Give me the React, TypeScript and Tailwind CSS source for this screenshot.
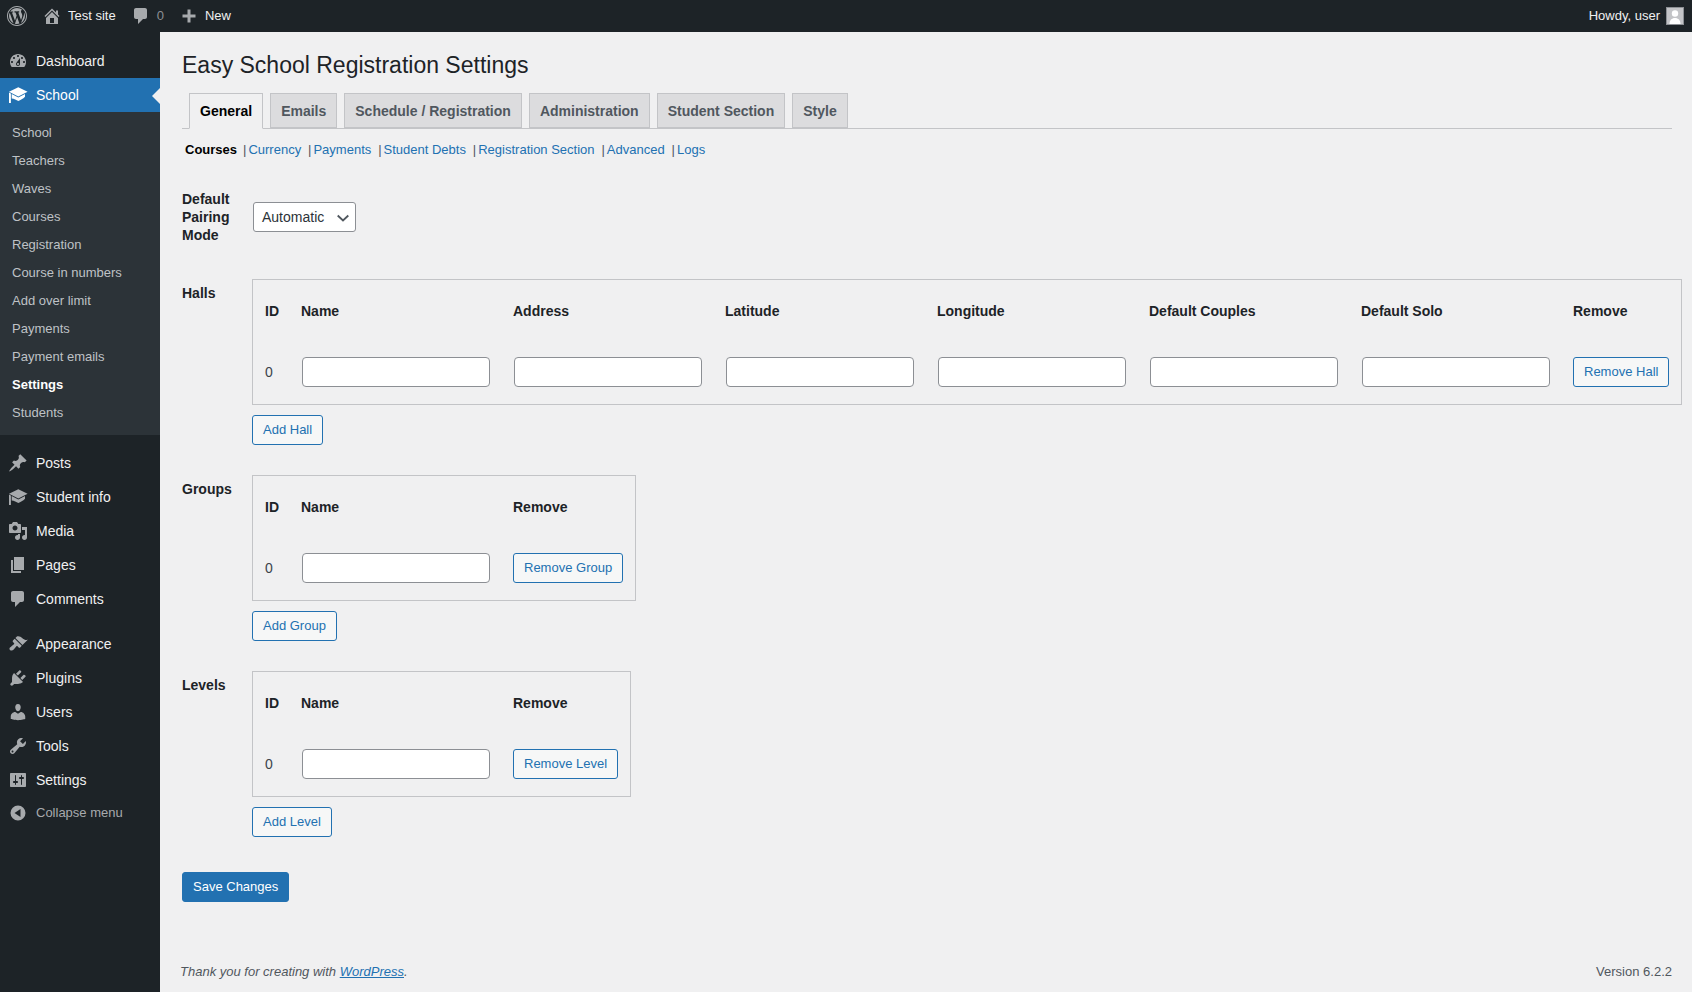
import React from "react";

const paths: Record<string, string> = {
  dashboard:
    "M3.76 16h12.48c1.1-1.37 1.76-3.11 1.76-5 0-4.42-3.58-8-8-8s-8 3.58-8 8c0 1.89.66 3.63 1.76 5zM10 4c.55 0 1 .45 1 1s-.45 1-1 1-1-.45-1-1 .45-1 1-1zM6 6c.55 0 1 .45 1 1s-.45 1-1 1-1-.45-1-1 .45-1 1-1zm8 0c.55 0 1 .45 1 1s-.45 1-1 1-1-.45-1-1 .45-1 1-1zm-5.37 5.55L12 7v6c0 1.1-.9 2-2 2s-2-.9-2-2c0-.57.24-1.08.63-1.45zM4 10c.55 0 1 .45 1 1s-.45 1-1 1-1-.45-1-1 .45-1 1-1zm12 0c.55 0 1 .45 1 1s-.45 1-1 1-1-.45-1-1 .45-1 1-1zm-5 3c0-.55-.45-1-1-1s-1 .45-1 1 .45 1 1 1 1-.45 1-1z",
  learn:
    "M1 6.800 10.300 2.300 19.600 6.800 10.300 11.400ZM1 7.600 2.900 8.500V18H1ZM3.700 8.900 10.300 12.400 17 9V11.800C15 13.800 12.500 15.200 10.300 15.900 8.500 15 6 13.800 3.700 13.500Z",
  post:
    "M10.44 3.02l1.82-1.82 6.36 6.35-1.83 1.82c-1.05-.68-2.48-.57-3.41.36l-.75.75c-.92.93-1.04 2.35-.35 3.41l-1.83 1.82-2.41-2.41-2.8 2.79c-.42.42-3.38 2.71-3.8 2.29s1.86-3.39 2.28-3.81l2.79-2.79L4.1 9.36l1.83-1.82c1.05.69 2.48.57 3.4-.36l.75-.75c.93-.92 1.05-2.35.36-3.41z",
  media:
    "M13 11V4c0-.55-.45-1-1-1h-1.67L9 1H5L3.67 3H2c-.55 0-1 .45-1 1v7c0 .55.45 1 1 1h10c.55 0 1-.45 1-1zM7 4.5c1.38 0 2.5 1.12 2.5 2.5S8.38 9.5 7 9.5 4.5 8.38 4.5 7 5.62 4.5 7 4.5zM14 6h5v10.5c0 1.38-1.12 2.5-2.5 2.5S14 17.88 14 16.5s1.12-2.5 2.5-2.5c.17 0 .34.02.5.05V9h-3V6zm-4 8.05V13h2v3.5c0 1.38-1.12 2.5-2.5 2.5S7 17.88 7 16.5 8.12 14 9.5 14c.17 0 .34.02.5.05z",
  page: "M6 15V2h10v13H6zm-1 1h8v2H3V5h2v11z",
  comments:
    "M5 2h9c1.1 0 2 .9 2 2v7c0 1.1-.9 2-2 2h-2l-5 5v-5H5c-1.1 0-2-.9-2-2V4c0-1.1.9-2 2-2z",
  appearance:
    "M14.48 11.06L7.41 3.99l1.5-1.5c.5-.56 2.3-.47 3.51.32 1.21.8 1.43 1.28 2.91 2.1 1.18.64 2.45 1.26 4.45.85zm-.71.71L6.7 4.7 4.93 6.47c-.39.39-.39 1.02 0 1.41l1.06 1.06c.39.39.39 1.03 0 1.42-.6.6-1.43 1.11-2.21 1.69-.35.26-.7.53-1.01.84C1.43 13.23.99 14.95 2 16c1.05 1.01 2.77.57 3.72-.39.31-.31.58-.66.84-1.01.58-.78 1.09-1.61 1.69-2.21.39-.39 1.03-.39 1.42 0l1.06 1.06c.39.39 1.02.39 1.41 0z",
  plugins:
    "M13.11 4.36L9.87 7.6 8 5.73l3.24-3.24c.35-.34 1.05-.2 1.56.32.52.51.66 1.21.31 1.55zm-8 1.77l.91-1.12 9.01 9.01-1.19.84c-.71.71-2.63 1.16-3.82 1.16H6.14L4.9 17.26c-.59.59-1.54.59-2.12 0-.59-.58-.59-1.53 0-2.12l1.24-1.24v-3.88c0-1.13.4-3.19 1.09-3.89zm7.26 3.97l3.24-3.24c.34-.35 1.04-.21 1.55.31.52.51.66 1.21.31 1.55l-3.24 3.25z",
  users:
    "M10 9.25c-2.27 0-2.73-3.44-2.73-3.44C7 4.02 7.82 2 9.97 2c2.16 0 2.98 2.02 2.71 3.81 0 0-.41 3.44-2.68 3.44zm0 2.57L12.72 10c2.39 0 4.52 2.33 4.52 4.53v2.49s-3.65 1.13-7.24 1.13c-3.65 0-7.24-1.13-7.24-1.13v-2.49c0-2.25 1.94-4.48 4.47-4.48z",
  tools:
    "M16.68 9.77c-1.34 1.34-3.3 1.67-4.95.99l-5.41 6.52c-.99.99-2.59.99-3.58 0s-.99-2.59 0-3.57l6.52-5.42c-.68-1.65-.35-3.61.99-4.95 1.28-1.28 3.12-1.62 4.72-1.06l-2.89 2.89 2.82 2.82 2.86-2.87c.53 1.58.18 3.39-1.08 4.65zM3.81 16.21c.4.39 1.04.39 1.43 0 .4-.4.4-1.04 0-1.43-.39-.4-1.03-.4-1.43 0-.39.39-.39 1.03 0 1.43z",
  settings:
    "M18 16V4c0-.55-.45-1-1-1H3c-.55 0-1 .45-1 1v12c0 .55.45 1 1 1h14c.55 0 1-.45 1-1zM8 11h1c.55 0 1 .45 1 1s-.45 1-1 1H8v1.5c0 .28-.22.5-.5.5s-.5-.22-.5-.5V13H6c-.55 0-1-.45-1-1s.45-1 1-1h1V5.5c0-.28.22-.5.5-.5s.5.22.5.5V11zm5-2h-1c-.55 0-1-.45-1-1s.45-1 1-1h1V5.5c0-.28.22-.5.5-.5s.5.22.5.5V7h1c.55 0 1 .45 1 1s-.45 1-1 1h-1v5.5c0 .28-.22.5-.5.5s-.5-.22-.5-.5V9z",
  collapse: "M10 2.500a7.500 7.500 0 1 0 0 15 7.500 7.500 0 0 0 0-15ZM12.500 6v8L6.500 10l6-4Z",
  home: "M16 8.5l1.53 1.53-1.06 1.06L10 4.62l-6.47 6.47-1.06-1.06L10 2.5l4 4v-2h2v4zm-6-2.46l6 5.99V18H4v-5.97zM12 17v-5H8v5h4z",
  plus: "M16.500 8.500v3h-5v5h-3v-5h-5v-3h5v-5h3v5h5z",
  wp: "M20 10c0-5.52-4.48-10-10-10S0 4.48 0 10s4.48 10 10 10 10-4.48 10-10zM10 1.01c4.97 0 8.99 4.02 8.99 8.99s-4.02 8.99-8.99 8.99S1.01 14.97 1.01 10 5.03 1.01 10 1.01zM8.01 14.82L4.96 6.61c.49-.03 1.05-.08 1.05-.08.43-.05.38-1.01-.06-.99 0 0-1.29.1-2.13.1-.15 0-.33 0-.52-.01 1.44-2.17 3.9-3.6 6.7-3.6 2.09 0 3.99.79 5.41 2.09-.6-.08-1.45.35-1.45 1.42 0 .66.38 1.22.79 1.88.31.54.5 1.22.5 2.21 0 1.34-1.27 4.48-1.27 4.48l-2.71-7.5c.48-.03.75-.16.75-.16.43-.05.38-1.1-.05-1.08 0 0-1.3.11-2.14.11-.78 0-2.11-.11-2.11-.11-.43-.02-.48 1.06-.05 1.08l.84.08 1.12 3.04zm6.02 2.15L16.64 10s.67-1.69.39-3.81c.63 1.14.94 2.42.94 3.81 0 2.96-1.56 5.58-3.94 6.97zM2.68 6.77L6.5 17.25c-2.67-1.3-4.47-4.08-4.47-7.25 0-1.16.2-2.23.65-3.23zm7.45 4.53l2.29 6.25c-.75.27-1.57.42-2.42.42-.72 0-1.41-.11-2.06-.3z",
};

function Icon({ name, className }: { name: string; className: string }) {
  return (
    <svg viewBox="0 0 20 20" className={className} fill="currentColor" fillRule="evenodd" aria-hidden="true">
      <path d={paths[name]} />
    </svg>
  );
}

function MenuItem({ icon, label }: { icon: string; label: string }) {
  return (
    <li className="flex h-[34px] items-center text-[14px] leading-[18px] text-[#f0f0f1]">
      <span className="flex w-[36px] shrink-0 justify-center">
        <Icon name={icon} className="h-5 w-5 text-[#a7aaad]" />
      </span>
      <span>{label}</span>
    </li>
  );
}

const subItems = ["School", "Teachers", "Waves", "Courses", "Registration", "Course in numbers", "Add over limit", "Payments", "Payment emails", "Settings", "Students"];

function Sidebar() {
  return (
    <nav className="w-[160px] shrink-0 bg-[#1d2327] pt-3">
      <ul>
        <MenuItem icon="dashboard" label="Dashboard" />
        <li className="relative flex h-[34px] items-center bg-[#2271b1] text-[14px] text-white">
          <span className="flex w-[36px] shrink-0 justify-center">
            <Icon name="learn" className="h-5 w-5 text-white" />
          </span>
          <span>School</span>
          <span className="absolute right-0 top-[10px] h-0 w-0 border-y-[8px] border-r-[8px] border-y-transparent border-r-[#f0f0f1]" />
        </li>
      </ul>
      <ul className="bg-[#2c3338] pb-[8px] pt-[7px]">
        {subItems.map((s) => (
          <li
            key={s}
            className={`flex h-[28px] items-center pl-3 text-[13px] ${s === "Settings" ? "font-semibold text-white" : "text-[#bfc2c6]"}`}
          >
            {s}
          </li>
        ))}
      </ul>
      <ul className="mt-[11px]">
        <MenuItem icon="post" label="Posts" />
        <MenuItem icon="learn" label="Student info" />
        <MenuItem icon="media" label="Media" />
        <MenuItem icon="page" label="Pages" />
        <MenuItem icon="comments" label="Comments" />
      </ul>
      <ul className="mt-[11px]">
        <MenuItem icon="appearance" label="Appearance" />
        <MenuItem icon="plugins" label="Plugins" />
        <MenuItem icon="users" label="Users" />
        <MenuItem icon="tools" label="Tools" />
        <MenuItem icon="settings" label="Settings" />
        <li className="flex h-[32px] items-center text-[13px] text-[#a7aaad]">
          <span className="flex w-[36px] shrink-0 justify-center">
            <Icon name="collapse" className="h-5 w-5 text-[#a7aaad]" />
          </span>
          <span>Collapse menu</span>
        </li>
      </ul>
    </nav>
  );
}

function AdminBar() {
  return (
    <header className="flex h-8 items-center justify-between bg-[#1d2327] text-[13px] text-[#f0f0f1]">
      <div className="flex items-center">
        <span className="flex w-[34px] justify-center">
          <Icon name="wp" className="h-5 w-5 text-[#a7aaad]" />
        </span>
        <Icon name="home" className="ml-[8px] h-5 w-5 text-[#a7aaad]" />
        <span className="ml-[6px]">Test site</span>
        <Icon name="comments" className="ml-[15px] h-5 w-5 text-[#a7aaad]" />
        <span className="ml-[6px] text-[#8c8f94]">0</span>
        <Icon name="plus" className="ml-[15px] h-5 w-5 text-[#a7aaad]" />
        <span className="ml-[6px]">New</span>
      </div>
      <div className="flex items-center">
        <span>Howdy, user</span>
        <span className="ml-[6px] mr-2 flex h-[18px] w-[18px] items-end justify-center overflow-hidden border border-[#8c8f94] bg-[#c3c4c7]">
          <svg viewBox="0 0 16 16" className="h-4 w-4 text-white" fill="currentColor" aria-hidden="true">
            <circle cx="8" cy="5.500" r="3.200" />
            <path d="M2.500 16c0-3.800 2.200-6 5.500-6s5.500 2.200 5.500 6Z" />
          </svg>
        </span>
      </div>
    </header>
  );
}

function Button({ children, primary = false }: { children: React.ReactNode; primary?: boolean }) {
  return (
    <button
      type="button"
      className={`h-[30px] whitespace-nowrap rounded-[3px] border px-[10px] text-[13px] leading-[28px] ${
        primary ? "border-[#2271b1] bg-[#2271b1] text-white" : "border-[#2271b1] bg-[#f6f7f7] text-[#2271b1]"
      }`}
    >
      {children}
    </button>
  );
}

function TextInput() {
  return <input type="text" className="block h-[30px] w-[188px] rounded-[4px] border border-[#8c8f94] bg-white" />;
}

function DataTable({ columns, action }: { columns: string[]; action: string }) {
  return (
    <div className="w-max border border-[#c3c4c7] pl-3 pr-[12px]">
      <div className="flex h-[62px] items-center text-[14px] font-semibold text-[#1d2327]">
        <span className="w-[36px]">ID</span>
        {columns.map((c) => (
          <span key={c} className="w-[212px]">
            {c}
          </span>
        ))}
        <span className="min-w-[59px]">Remove</span>
      </div>
      <div className="flex h-[62px] items-start pt-[15px] text-[14px] text-[#3c434a]">
        <span className="w-[36px] pt-[5px] leading-[20px]">0</span>
        {columns.map((c) => (
          <span key={c} className="w-[212px] pl-px">
            <TextInput />
          </span>
        ))}
        <Button>{action}</Button>
      </div>
    </div>
  );
}

function Section({ label, columns, action, add }: { label: string; columns: string[]; action: string; add: string }) {
  return (
    <section className="flex">
      <h3 className="w-[70px] shrink-0 pt-[5px] text-[14px] font-semibold leading-[18px] text-[#1d2327]">{label}</h3>
      <div>
        <DataTable columns={columns} action={action} />
        <div className="mt-[10px]">
          <Button>{add}</Button>
        </div>
      </div>
    </section>
  );
}

const tabs = ["General", "Emails", "Schedule / Registration", "Administration", "Student Section", "Style"];
const subLinks = ["Currency", "Payments", "Student Debts", "Registration Section", "Advanced", "Logs"];

function Content() {
  return (
    <main className="flex min-w-0 flex-1 flex-col pl-[22px] pr-5">
      <h1 className="mt-[19px] text-[23px] font-normal leading-[29px] text-[#1d2327]">Easy School Registration Settings</h1>
      <div className="mt-[13px] flex h-[36px] gap-[7px] border-b border-[#c3c4c7] pl-[7px]">
        {tabs.map((t, i) => (
          <span
            key={t}
            className={`border border-[#c3c4c7] px-[10px] text-[14px] font-semibold leading-[34px] ${
              i === 0 ? "h-[36px] border-b-[#f0f0f1] bg-[#f0f0f1] text-black" : "h-[35px] bg-[#dcdcde] text-[#50575e]"
            }`}
          >
            {t}
          </span>
        ))}
      </div>
      <div className="mt-[12px] flex h-[18px] items-center pl-[3px] text-[13px] leading-[18px] text-[#2271b1]">
        <span className="mr-[5px] font-semibold text-black">Courses</span>
        {subLinks.map((s) => (
          <span key={s} className="mr-[5.9px] flex">
            <span className="mr-[2px] ml-px text-[#50575e]">|</span>
            {s}
          </span>
        ))}
      </div>
      <div className="mt-[31px] flex items-center">
        <span className="w-[71px] text-[14px] font-semibold leading-[18px] text-[#1d2327]">
          Default
          <br />
          Pairing
          <br />
          Mode
        </span>
        <span className="relative flex h-[30px] w-[103px] items-center rounded-[3px] border border-[#8c8f94] bg-white pl-2 text-[14px] text-[#2c3338]">
          Automatic
          <svg viewBox="0 0 20 20" className="absolute right-[2px] top-[5px] h-5 w-5 text-[#50575e]" fill="none" stroke="currentColor" strokeWidth="1.800" aria-hidden="true">
            <path d="M4.700 7.500 10 12.500 15.300 7.500" />
          </svg>
        </span>
      </div>
      <div className="mt-[35px] flex flex-col gap-[30px]">
        <Section label="Halls" columns={["Name", "Address", "Latitude", "Longitude", "Default Couples", "Default Solo"]} action="Remove Hall" add="Add Hall" />
        <Section label="Groups" columns={["Name"]} action="Remove Group" add="Add Group" />
        <Section label="Levels" columns={["Name"]} action="Remove Level" add="Add Level" />
      </div>
      <div className="mt-[35px]">
        <Button primary>Save Changes</Button>
      </div>
      <footer className="mt-auto flex items-center justify-between pb-[11px] text-[13px] text-[#50575e]">
        <span className="-ml-[2px] italic">
          Thank you for creating with <span className="text-[#2271b1] underline">WordPress</span>.
        </span>
        <span>Version 6.2.2</span>
      </footer>
    </main>
  );
}

export default function App() {
  return (
    <div className="flex min-h-screen flex-col bg-[#f0f0f1] font-['Liberation_Sans',Arial,sans-serif]">
      <AdminBar />
      <div className="flex flex-1">
        <Sidebar />
        <Content />
      </div>
    </div>
  );
}
